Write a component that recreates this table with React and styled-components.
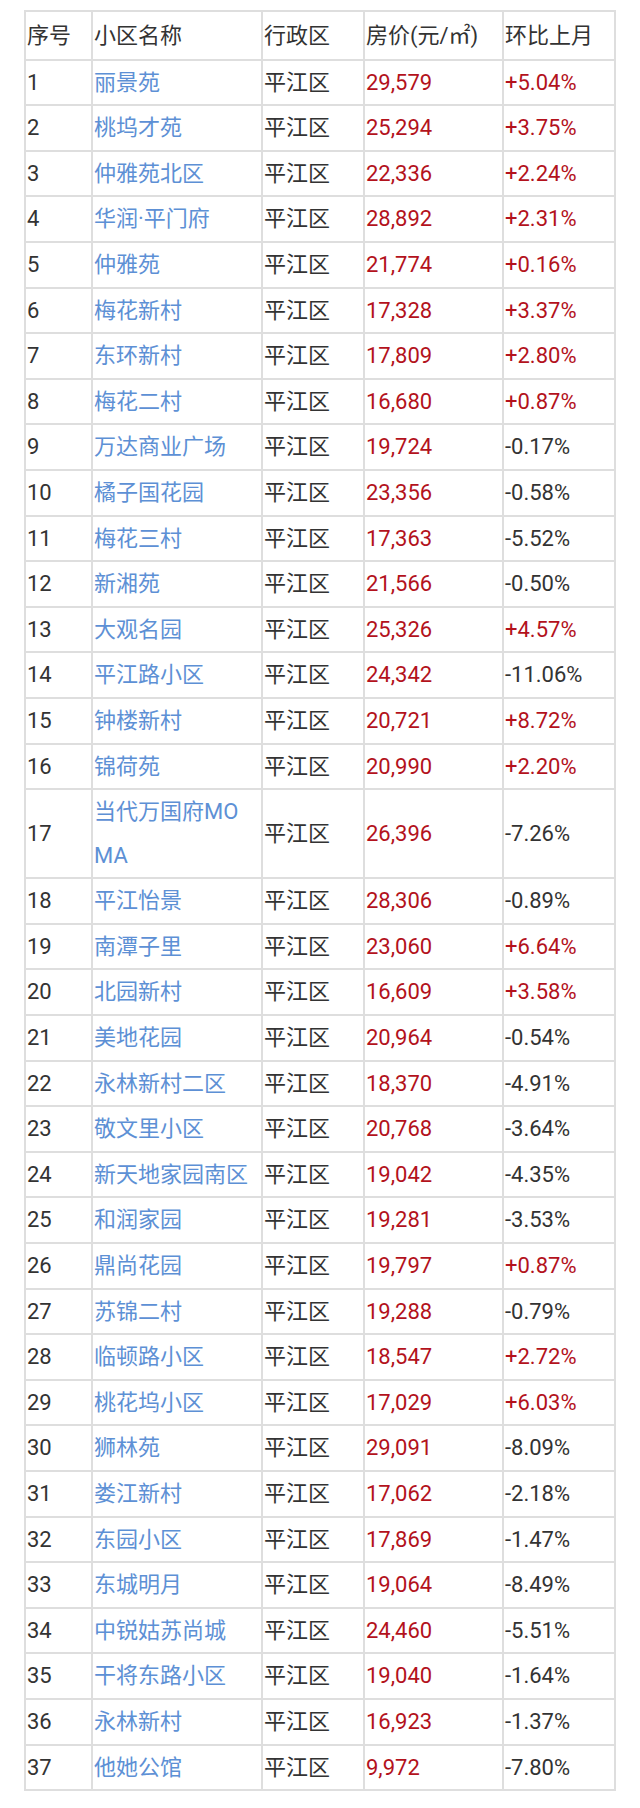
import React from "react";
import styled, { createGlobalStyle } from "styled-components";

const GlobalStyle = createGlobalStyle`
  html, body {
    margin: 0;
    padding: 0;
    background: #ffffff;
  }
  body {
    font-family: Roboto, "Noto Sans CJK SC", "Noto Sans", sans-serif;
    color: #333333;
  }
`;

const Page = styled.div`
  padding: 10px 0 16px 24px;
`;

const Table = styled.table`
  width: 592px;
  table-layout: fixed;
  border-collapse: separate;
  border-spacing: 0;
  border-top: 2px solid #dedede;
  border-left: 2px solid #dedede;
  font-size: 22px;
`;

const Cell = styled.td`
  box-sizing: border-box;
  padding: 0 1px;
  border-right: 2px solid #dedede;
  border-bottom: 2px solid #dedede;
  line-height: 43.6px;
  vertical-align: middle;
  text-align: left;
  font-weight: 400;
  word-break: break-all;
  color: ${(p) => (p.$tone === "red" ? "#b3121c" : "#333333")};
`;

const NameCell = styled(Cell)`
  padding-right: 7px;
  color: #5d90d5;
`;

const HeadCell = styled(Cell).attrs({ as: "th" })`
  width: ${(p) => p.$w}px;
  padding: 1.5px 1px;
`;

const columns = [
  { label: "序号", w: 67 },
  { label: "小区名称", w: 170 },
  { label: "行政区", w: 102 },
  { label: "房价(元/㎡)", w: 139 },
  { label: "环比上月", w: 112 },
];

const rows = [
  ["丽景苑", "29,579", "+5.04%"],
  ["桃坞才苑", "25,294", "+3.75%"],
  ["仲雅苑北区", "22,336", "+2.24%"],
  ["华润·平门府", "28,892", "+2.31%"],
  ["仲雅苑", "21,774", "+0.16%"],
  ["梅花新村", "17,328", "+3.37%"],
  ["东环新村", "17,809", "+2.80%"],
  ["梅花二村", "16,680", "+0.87%"],
  ["万达商业广场", "19,724", "-0.17%"],
  ["橘子国花园", "23,356", "-0.58%"],
  ["梅花三村", "17,363", "-5.52%"],
  ["新湘苑", "21,566", "-0.50%"],
  ["大观名园", "25,326", "+4.57%"],
  ["平江路小区", "24,342", "-11.06%"],
  ["钟楼新村", "20,721", "+8.72%"],
  ["锦荷苑", "20,990", "+2.20%"],
  ["当代万国府MOMA", "26,396", "-7.26%"],
  ["平江怡景", "28,306", "-0.89%"],
  ["南潭子里", "23,060", "+6.64%"],
  ["北园新村", "16,609", "+3.58%"],
  ["美地花园", "20,964", "-0.54%"],
  ["永林新村二区", "18,370", "-4.91%"],
  ["敬文里小区", "20,768", "-3.64%"],
  ["新天地家园南区", "19,042", "-4.35%"],
  ["和润家园", "19,281", "-3.53%"],
  ["鼎尚花园", "19,797", "+0.87%"],
  ["苏锦二村", "19,288", "-0.79%"],
  ["临顿路小区", "18,547", "+2.72%"],
  ["桃花坞小区", "17,029", "+6.03%"],
  ["狮林苑", "29,091", "-8.09%"],
  ["娄江新村", "17,062", "-2.18%"],
  ["东园小区", "17,869", "-1.47%"],
  ["东城明月", "19,064", "-8.49%"],
  ["中锐姑苏尚城", "24,460", "-5.51%"],
  ["干将东路小区", "19,040", "-1.64%"],
  ["永林新村", "16,923", "-1.37%"],
  ["他她公馆", "9,972", "-7.80%"],
];

export default function App() {
  return (
    <Page>
      <GlobalStyle />
      <Table>
        <thead>
          <tr>
            {columns.map((c) => (
              <HeadCell key={c.label} $w={c.w}>
                {c.label}
              </HeadCell>
            ))}
          </tr>
        </thead>
        <tbody>
          {rows.map(([name, price, change], i) => (
            <tr key={name}>
              <Cell>{i + 1}</Cell>
              <NameCell>{name}</NameCell>
              <Cell>平江区</Cell>
              <Cell $tone="red">{price}</Cell>
              <Cell $tone={change.startsWith("+") ? "red" : "plain"}>{change}</Cell>
            </tr>
          ))}
        </tbody>
      </Table>
    </Page>
  );
}
